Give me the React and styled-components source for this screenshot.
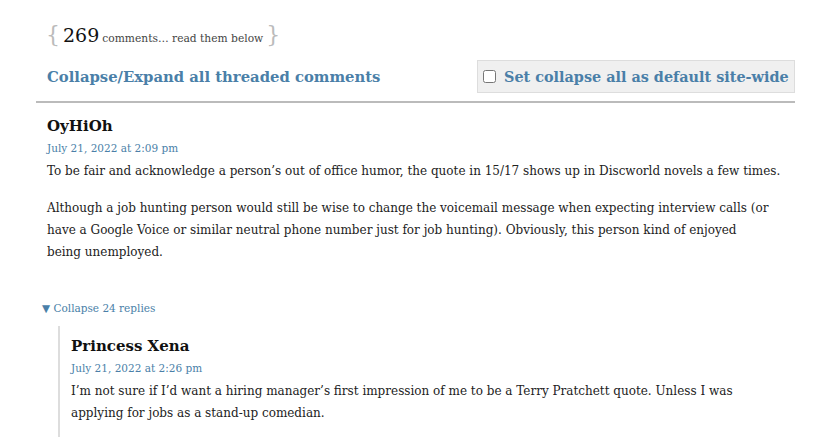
import React from "react";
import styled, { createGlobalStyle } from "styled-components";

const Global = createGlobalStyle`
  html, body { margin: 0; padding: 0; background: #fff; }
  body { font-family: "DejaVu Serif", Georgia, serif; color: #222; }
`;

const Wrap = styled.div`
  width: 759px;
  margin-left: 36px;
  padding-top: 22px;
`;

const Count = styled.div`
  padding-left: 10px;
  display: flex;
  align-items: baseline;
  gap: 3px;
  color: #444;
  font-size: 10.7px;
`;

const Brace = styled.span`
  font-size: 22px;
  color: #bbb;
  font-weight: 300;
`;

const Num = styled.span`
  font-size: 19px;
  color: #111;
`;

const Controls = styled.div`
  display: flex;
  justify-content: space-between;
  align-items: center;
  margin-top: 13px;
  padding: 0 0 8px 11px;
  border-bottom: 2px solid #bbb;
`;

const Link = styled.a`
  color: #4a7fa8;
  font-weight: bold;
  font-size: 14.8px;
  text-decoration: none;
`;

const DefaultBox = styled.label`
  display: flex;
  align-items: center;
  gap: 8px;
  width: 318px;
  height: 33px;
  box-sizing: border-box;
  padding: 0 5px;
  background: #f0f0f0;
  border: 1px solid #ddd;
  color: #4a7fa8;
  font-weight: bold;
  font-size: 14.4px;
  white-space: nowrap;
  input { margin: 0; width: 13px; height: 13px; }
`;

const Comment = styled.div`
  padding: ${(p) => (p.$nested ? "10px 0 13px 11px" : "13px 0 0 11px")};
  ${(p) => p.$nested && "border-left: 2px solid #ddd; margin-left: 22px;"}
`;

const Name = styled.div`
  font-weight: bold;
  font-size: 15px;
  color: #111;
  line-height: 20px;
`;

const DateLink = styled.a`
  display: block;
  color: #4a7fa8;
  font-size: 10.5px;
  text-decoration: none;
  line-height: 18px;
  margin-top: 3px;
  margin-bottom: 3px;
`;

const Para = styled.p`
  margin: 0 0 15px;
  font-size: 12px;
  line-height: 22px;
  color: #222;
  &:last-child { margin-bottom: 0; }
`;

const Keep = styled.span`
  white-space: nowrap;
`;

const Toggle = styled.a`
  display: block;
  color: #4a7fa8;
  font-size: 10.5px;
  margin: 39px 0 12px 6px;
  text-decoration: none;
`;

export default function App() {
  return (
    <>
      <Global />
      <Wrap>
        <Count>
          <Brace>{"{"}</Brace>
          <Num>269</Num>
          <span>comments… read them below</span>
          <Brace>{"}"}</Brace>
        </Count>
        <Controls>
          <Link href="#">Collapse/Expand all threaded comments</Link>
          <DefaultBox>
            <input type="checkbox" />
            Set collapse all as default site-wide
          </DefaultBox>
        </Controls>
        <Comment>
          <Name>OyHiOh</Name>
          <DateLink href="#">July 21, 2022 at 2:09 pm</DateLink>
          <Para>
            To be fair and acknowledge a person’s out of office humor, the quote in 15/17 shows up in Discworld novels a few times.
          </Para>
          <Para>
            Although a job hunting person would still be wise to change the voicemail message when expecting interview calls (or have a Google Voice or similar neutral phone number just for job hunting). Obviously, this person kind of enjoyed <Keep>being unemployed.</Keep>
          </Para>
        </Comment>
        <Toggle href="#">▼ Collapse 24 replies</Toggle>
        <Comment $nested>
          <Name>Princess Xena</Name>
          <DateLink href="#">July 21, 2022 at 2:26 pm</DateLink>
          <Para>
            I’m not sure if I’d want a hiring manager’s first impression of me to be a Terry Pratchett quote. Unless I was <Keep>applying for</Keep> jobs as a stand-up comedian.
          </Para>
        </Comment>
      </Wrap>
    </>
  );
}
